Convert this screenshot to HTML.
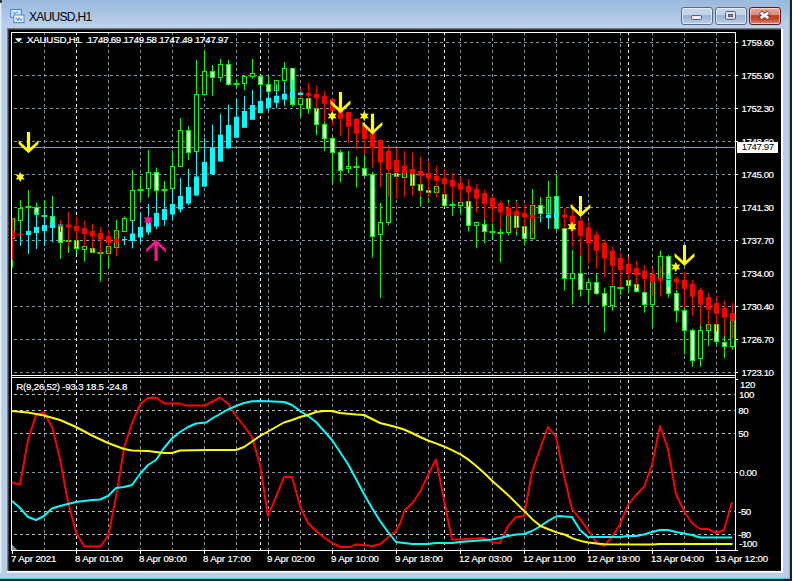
<!DOCTYPE html>
<html><head><meta charset="utf-8"><title>XAUUSD,H1</title>
<style>
html,body{margin:0;padding:0;}
body{width:793px;height:581px;overflow:hidden;position:relative;background:#b8cde8;font-family:"Liberation Sans",sans-serif;}
#win{position:absolute;left:0;top:0;width:793px;height:581px;background:linear-gradient(#9ab8db 0,#a3bfdf 8px,#b3cbe7 20px,#bad1ec 27px,#b8cde8 28px,#b8cde8);}
#title{position:absolute;left:29px;top:9px;font-size:12px;color:#000;letter-spacing:-0.7px;line-height:16px;white-space:nowrap}
.pl{position:absolute;left:741.5px;font-size:9.7px;line-height:12px;color:#fff;white-space:nowrap;letter-spacing:-0.42px;-webkit-text-stroke:0.2px #fff}
.dl{position:absolute;top:553.2px;margin-left:-1px;font-size:9.7px;line-height:12px;color:#fff;white-space:nowrap;letter-spacing:-0.155px;-webkit-text-stroke:0.2px #fff}
#hdr{position:absolute;left:27px;top:34.2px;font-size:9.7px;line-height:12px;color:#fff;white-space:nowrap;letter-spacing:-0.19px;-webkit-text-stroke:0.2px #fff}
#sub{position:absolute;left:16.3px;top:380.8px;font-size:9.7px;line-height:12px;color:#fff;white-space:nowrap;letter-spacing:-0.22px;-webkit-text-stroke:0.2px #fff}
#cur{position:absolute;left:737px;top:142px;width:41px;height:11px;background:#fff;color:#000;font-size:9.7px;line-height:10.7px;letter-spacing:-0.42px;text-indent:4.7px}
.btn{position:absolute;top:7px;height:18px;width:31.5px;border-radius:3px;box-sizing:border-box;border:1px solid #5b6983;box-shadow:inset 0 0 0 1px rgba(255,255,255,.55)}
.bb{background:linear-gradient(#c6d7ec 0,#c1d3ea 46%,#98b2d3 47%,#a9c1df 75%,#bcd1ea 100%)}
.br{background:linear-gradient(#e9aa9d 0,#dc8775 46%,#bf3c22 47%,#c94d33 72%,#df8a70 100%);border-color:#5a1c1c}
.edge{position:absolute}
</style></head><body>
<div id="win">
<div class="edge" style="left:0;top:0;width:1px;height:581px;background:#e6eef8"></div>
<div class="edge" style="left:1px;top:0;width:1px;height:581px;background:rgba(255,255,255,.25)"></div>
<div class="edge" style="left:0;top:0;width:1.6px;height:2.6px;background:#2a3440;border-radius:0 0 1.5px 0"></div>
<div id="title">XAUUSD,H1</div>
<svg style="position:absolute;left:9px;top:8px" width="17" height="17" viewBox="0 0 17 17"><rect x="1.7" y="1.5" width="10.6" height="7.6" fill="#e3eeff" stroke="#3f7fe6" stroke-width="1"/><path d="M3.5 5.5l1.2-1.5 1.5 2 1.5-2.2 1.5 1.7" stroke="#3f7fe6" fill="none" stroke-width=".9"/><rect x="4.8" y="7" width="10.2" height="7.6" fill="#f4f8ff" stroke="#3f7fe6" stroke-width="1"/><path d="M6.3 10.2l1.3 0 1.2 2.6 1.5-3.2 1.4 3.2 1.3-2.4" stroke="#2f6fe0" fill="none" stroke-width=".9"/></svg>
<div class="btn bb" style="left:681px"></div>
<div class="btn bb" style="left:715px"></div>
<div class="btn br" style="left:749px;width:32px"></div>
<svg style="position:absolute;left:681px;top:7px" width="100" height="18" viewBox="0 0 100 18"><rect x="10.6" y="8.6" width="9.8" height="3.8" rx="1" fill="#fbfbfb" stroke="#48506a" stroke-width="1"/><rect x="44.6" y="4.6" width="9.8" height="7.6" rx="1" fill="#f8f8f8" stroke="#48506a" stroke-width="1"/><rect x="47.3" y="7.3" width="4.4" height="2.4" fill="#7388a8" stroke="#48506a" stroke-width="0.9"/><path d="M79.2 5.3l8.6 6.1M87.8 5.3l-8.6 6.1" stroke="#5a3030" stroke-width="4.2" stroke-linecap="butt"/><path d="M79.6 5.6l7.8 5.5M87.4 5.6l-7.8 5.5" stroke="#fff" stroke-width="2.7" stroke-linecap="butt"/></svg>
<div class="edge" style="left:0;top:572.7px;width:790px;height:6px;background:#b8cde8"></div>
<div class="edge" style="left:0;top:578.3px;width:791px;height:1px;background:#52c6ee"></div>
<div class="edge" style="left:0;top:579.3px;width:792px;height:2px;background:#18222c"></div>
<div class="edge" style="left:789.2px;top:0;width:1px;height:579px;background:#52c6ee"></div>
<div class="edge" style="left:790.2px;top:0;width:1.5px;height:581px;background:#18222c"></div>
<div class="edge" style="left:791.7px;top:0;width:1.3px;height:581px;background:#fff"></div>
</div>
<svg width="793" height="581" viewBox="0 0 793 581" style="position:absolute;left:0;top:0">
<rect x="7" y="28.5" width="776" height="544.2" fill="#fff"/>
<rect x="7" y="28" width="774" height="542.7" fill="#7c7c7c"/>
<rect x="8" y="29" width="773" height="541.7" fill="#3c3c3c"/>
<rect x="9" y="30" width="772" height="540.7" fill="#000"/>
<defs><clipPath id="cm"><rect x="11" y="32" width="725" height="343"/></clipPath><clipPath id="cs"><rect x="12" y="378" width="721" height="172"/></clipPath></defs>
<path d="M10.7 42.5H736M10.7 75.5H736M10.7 108.5H736M10.7 141.5H736M10.7 174.5H736M10.7 207.5H736M10.7 240.5H736M10.7 273.5H736M10.7 306.5H736M10.7 339.5H736M10.7 372.5H736M10.7 472.5H736M44.5 29.3V375M44.5 377.3V550M76.5 29.3V375M76.5 377.3V550M108.5 29.3V375M108.5 377.3V550M140.5 29.3V375M140.5 377.3V550M172.5 29.3V375M172.5 377.3V550M204.5 29.3V375M204.5 377.3V550M236.5 29.3V375M236.5 377.3V550M268.5 29.3V375M268.5 377.3V550M300.5 29.3V375M300.5 377.3V550M332.5 29.3V375M332.5 377.3V550M364.5 29.3V375M364.5 377.3V550M396.5 29.3V375M396.5 377.3V550M428.5 29.3V375M428.5 377.3V550M460.5 29.3V375M460.5 377.3V550M492.5 29.3V375M492.5 377.3V550M524.5 29.3V375M524.5 377.3V550M556.5 29.3V375M556.5 377.3V550M588.5 29.3V375M588.5 377.3V550M620.5 29.3V375M620.5 377.3V550M652.5 29.3V375M652.5 377.3V550M684.5 29.3V375M684.5 377.3V550M716.5 29.3V375M716.5 377.3V550"  stroke="#8796a6" stroke-width="1" stroke-dasharray="3 3" stroke-dashoffset="3" fill="none" shape-rendering="crispEdges"/>
<path d="M10.7 394.5H736M10.7 410.5H736M10.7 433.5H736M10.7 511.5H736M10.7 534.5H736" stroke="#c0c0c0" stroke-width="1" stroke-dasharray="3 3" stroke-dashoffset="3" fill="none" shape-rendering="crispEdges"/>
<path d="M76.5 29.3V375M76.5 377.3V550M260.5 29.3V375M260.5 377.3V550M444.5 29.3V375M444.5 377.3V550M628.5 29.3V375M628.5 377.3V550" stroke="#ffffff" stroke-width="1" stroke-dasharray="3 3" stroke-dashoffset="3" fill="none" shape-rendering="crispEdges"/>
<path d="M11 147.5H736" stroke="#8494a8" stroke-width="1" shape-rendering="crispEdges"/>
<g clip-path="url(#cm)">
<path d="M12.5 218V267.5" stroke="#00ff00" stroke-width="1"/>
<rect x="10.5" y="218.5" width="4" height="20" fill="#000" stroke="#00ff00" stroke-width="1"/>
<path d="M20.5 200V246" stroke="#00ff00" stroke-width="1"/>
<rect x="18.5" y="208.5" width="4" height="12" fill="#000" stroke="#00ff00" stroke-width="1"/>
<path d="M28.5 190V240" stroke="#00ff00" stroke-width="1"/>
<rect x="25.5" y="206" width="6" height="2" fill="#00ff00"/>
<path d="M36.5 202.7V225" stroke="#00ff00" stroke-width="1"/>
<rect x="34.5" y="207.5" width="4" height="7" fill="#fff" stroke="#00ff00" stroke-width="1"/>
<path d="M44.5 200V225" stroke="#00ff00" stroke-width="1"/>
<rect x="41.5" y="215" width="6" height="2" fill="#00ff00"/>
<path d="M52.5 196V226" stroke="#00ff00" stroke-width="1"/>
<rect x="50.5" y="216.5" width="4" height="8" fill="#fff" stroke="#00ff00" stroke-width="1"/>
<path d="M60.5 220V259" stroke="#00ff00" stroke-width="1"/>
<rect x="58.5" y="226.5" width="4" height="16" fill="#fff" stroke="#00ff00" stroke-width="1"/>
<path d="M68.5 236V253" stroke="#00ff00" stroke-width="1"/>
<rect x="65.5" y="240" width="6" height="2" fill="#00ff00"/>
<path d="M76.5 238V254" stroke="#00ff00" stroke-width="1"/>
<rect x="74.5" y="240.5" width="4" height="8" fill="#fff" stroke="#00ff00" stroke-width="1"/>
<path d="M84.5 244V261.5" stroke="#00ff00" stroke-width="1"/>
<rect x="82.5" y="246.5" width="4" height="3" fill="#000" stroke="#00ff00" stroke-width="1"/>
<path d="M92.5 246V253" stroke="#00ff00" stroke-width="1"/>
<rect x="90.5" y="248.5" width="4" height="4" fill="#fff" stroke="#00ff00" stroke-width="1"/>
<path d="M100.5 250V281.5" stroke="#00ff00" stroke-width="1"/>
<rect x="97.5" y="252" width="6" height="2" fill="#00ff00"/>
<path d="M108.5 245V268" stroke="#00ff00" stroke-width="1"/>
<rect x="106.5" y="246.5" width="4" height="7" fill="#000" stroke="#00ff00" stroke-width="1"/>
<path d="M116.5 220V248" stroke="#00ff00" stroke-width="1"/>
<rect x="114.5" y="230.5" width="4" height="17" fill="#000" stroke="#00ff00" stroke-width="1"/>
<path d="M124.5 216.5V232" stroke="#00ff00" stroke-width="1"/>
<rect x="122.5" y="218.5" width="4" height="13" fill="#000" stroke="#00ff00" stroke-width="1"/>
<path d="M132.5 170V220.5" stroke="#00ff00" stroke-width="1"/>
<rect x="130.5" y="190.5" width="4" height="30" fill="#000" stroke="#00ff00" stroke-width="1"/>
<path d="M140.5 176V201.5" stroke="#00ff00" stroke-width="1"/>
<rect x="137.5" y="189" width="6" height="2" fill="#00ff00"/>
<path d="M148.5 150V197.5" stroke="#00ff00" stroke-width="1"/>
<rect x="146.5" y="172.5" width="4" height="16" fill="#000" stroke="#00ff00" stroke-width="1"/>
<path d="M156.5 167.5V196" stroke="#00ff00" stroke-width="1"/>
<rect x="154.5" y="172.5" width="4" height="18" fill="#fff" stroke="#00ff00" stroke-width="1"/>
<path d="M164.5 181V200" stroke="#00ff00" stroke-width="1"/>
<rect x="161.5" y="189" width="6" height="2" fill="#00ff00"/>
<path d="M172.5 150.5V198" stroke="#00ff00" stroke-width="1"/>
<rect x="170.5" y="166.5" width="4" height="22" fill="#000" stroke="#00ff00" stroke-width="1"/>
<path d="M180.5 118V167" stroke="#00ff00" stroke-width="1"/>
<rect x="178.5" y="130.5" width="4" height="36" fill="#000" stroke="#00ff00" stroke-width="1"/>
<path d="M188.5 126V160" stroke="#00ff00" stroke-width="1"/>
<rect x="186.5" y="130.5" width="4" height="22" fill="#fff" stroke="#00ff00" stroke-width="1"/>
<path d="M196.5 60V153" stroke="#00ff00" stroke-width="1"/>
<rect x="194.5" y="94.5" width="4" height="57" fill="#000" stroke="#00ff00" stroke-width="1"/>
<path d="M204.5 50V95.5" stroke="#00ff00" stroke-width="1"/>
<rect x="202.5" y="71.5" width="4" height="23" fill="#000" stroke="#00ff00" stroke-width="1"/>
<path d="M212.5 65V95.7" stroke="#00ff00" stroke-width="1"/>
<rect x="210.5" y="71.5" width="4" height="6" fill="#fff" stroke="#00ff00" stroke-width="1"/>
<path d="M220.5 59V81.7" stroke="#00ff00" stroke-width="1"/>
<rect x="218.5" y="64.5" width="4" height="13" fill="#000" stroke="#00ff00" stroke-width="1"/>
<path d="M228.5 60V85.8" stroke="#00ff00" stroke-width="1"/>
<rect x="226.5" y="64.5" width="4" height="20" fill="#fff" stroke="#00ff00" stroke-width="1"/>
<path d="M236.5 79V88.3" stroke="#00ff00" stroke-width="1"/>
<rect x="233.5" y="83" width="6" height="2" fill="#00ff00"/>
<path d="M244.5 75V90.7" stroke="#00ff00" stroke-width="1"/>
<rect x="242.5" y="76.5" width="4" height="7" fill="#000" stroke="#00ff00" stroke-width="1"/>
<path d="M252.5 59V78.8" stroke="#00ff00" stroke-width="1"/>
<rect x="250.5" y="73.5" width="4" height="3" fill="#000" stroke="#00ff00" stroke-width="1"/>
<path d="M260.5 75V86.5" stroke="#00ff00" stroke-width="1"/>
<rect x="258.5" y="76.5" width="4" height="8" fill="#fff" stroke="#00ff00" stroke-width="1"/>
<path d="M268.5 76V92" stroke="#00ff00" stroke-width="1"/>
<rect x="266.5" y="84.5" width="4" height="7" fill="#fff" stroke="#00ff00" stroke-width="1"/>
<path d="M276.5 80V91" stroke="#00ff00" stroke-width="1"/>
<rect x="274.5" y="80.5" width="4" height="10" fill="#000" stroke="#00ff00" stroke-width="1"/>
<path d="M284.5 62V81.7" stroke="#00ff00" stroke-width="1"/>
<rect x="282.5" y="68.5" width="4" height="12" fill="#000" stroke="#00ff00" stroke-width="1"/>
<path d="M292.5 68V106.7" stroke="#00ff00" stroke-width="1"/>
<rect x="290.5" y="68.5" width="4" height="36" fill="#fff" stroke="#00ff00" stroke-width="1"/>
<path d="M300.5 97V116.7" stroke="#00ff00" stroke-width="1"/>
<rect x="298.5" y="98.5" width="4" height="6" fill="#000" stroke="#00ff00" stroke-width="1"/>
<path d="M308.5 98V113.7" stroke="#00ff00" stroke-width="1"/>
<rect x="306.5" y="98.5" width="4" height="10" fill="#fff" stroke="#00ff00" stroke-width="1"/>
<path d="M316.5 107V135" stroke="#00ff00" stroke-width="1"/>
<rect x="314.5" y="108.5" width="4" height="16" fill="#fff" stroke="#00ff00" stroke-width="1"/>
<path d="M324.5 121V151" stroke="#00ff00" stroke-width="1"/>
<rect x="322.5" y="124.5" width="4" height="14" fill="#fff" stroke="#00ff00" stroke-width="1"/>
<path d="M332.5 137V183.3" stroke="#00ff00" stroke-width="1"/>
<rect x="330.5" y="138.5" width="4" height="14" fill="#fff" stroke="#00ff00" stroke-width="1"/>
<path d="M340.5 149.7V182.5" stroke="#00ff00" stroke-width="1"/>
<rect x="338.5" y="152.5" width="4" height="18" fill="#fff" stroke="#00ff00" stroke-width="1"/>
<path d="M348.5 151V173.3" stroke="#00ff00" stroke-width="1"/>
<rect x="346.5" y="166.5" width="4" height="2" fill="#000" stroke="#00ff00" stroke-width="1"/>
<path d="M356.5 156.7V187.5" stroke="#00ff00" stroke-width="1"/>
<rect x="353.5" y="166" width="6" height="2" fill="#00ff00"/>
<path d="M364.5 154.7V177.5" stroke="#00ff00" stroke-width="1"/>
<rect x="362.5" y="168.5" width="4" height="7" fill="#fff" stroke="#00ff00" stroke-width="1"/>
<path d="M372.5 171.7V257.5" stroke="#00ff00" stroke-width="1"/>
<rect x="370.5" y="174.5" width="4" height="62" fill="#fff" stroke="#00ff00" stroke-width="1"/>
<path d="M380.5 203V298.3" stroke="#00ff00" stroke-width="1"/>
<rect x="378.5" y="222.5" width="4" height="12" fill="#000" stroke="#00ff00" stroke-width="1"/>
<path d="M388.5 172V225.3" stroke="#00ff00" stroke-width="1"/>
<rect x="386.5" y="173.5" width="4" height="49" fill="#000" stroke="#00ff00" stroke-width="1"/>
<path d="M396.5 172V178" stroke="#00ff00" stroke-width="1"/>
<rect x="394.5" y="173.5" width="4" height="3" fill="#fff" stroke="#00ff00" stroke-width="1"/>
<path d="M404.5 172V178.5" stroke="#00ff00" stroke-width="1"/>
<rect x="402.5" y="172.5" width="4" height="5" fill="#000" stroke="#00ff00" stroke-width="1"/>
<path d="M412.5 173V186" stroke="#00ff00" stroke-width="1"/>
<rect x="410.5" y="174.5" width="4" height="11" fill="#fff" stroke="#00ff00" stroke-width="1"/>
<path d="M420.5 184V206.7" stroke="#00ff00" stroke-width="1"/>
<rect x="418.5" y="184.5" width="4" height="6" fill="#fff" stroke="#00ff00" stroke-width="1"/>
<path d="M428.5 189V203" stroke="#00ff00" stroke-width="1"/>
<rect x="426.5" y="190.5" width="4" height="2" fill="#fff" stroke="#00ff00" stroke-width="1"/>
<path d="M436.5 186V197" stroke="#00ff00" stroke-width="1"/>
<rect x="434.5" y="186.5" width="4" height="6" fill="#000" stroke="#00ff00" stroke-width="1"/>
<path d="M444.5 193V206.5" stroke="#00ff00" stroke-width="1"/>
<rect x="442.5" y="194.5" width="4" height="11" fill="#fff" stroke="#00ff00" stroke-width="1"/>
<path d="M452.5 200V215.8" stroke="#00ff00" stroke-width="1"/>
<rect x="449.5" y="204" width="6" height="2" fill="#00ff00"/>
<path d="M460.5 202V214" stroke="#00ff00" stroke-width="1"/>
<rect x="458.5" y="202.5" width="4" height="3" fill="#000" stroke="#00ff00" stroke-width="1"/>
<path d="M468.5 200V231.5" stroke="#00ff00" stroke-width="1"/>
<rect x="466.5" y="201.5" width="4" height="24" fill="#fff" stroke="#00ff00" stroke-width="1"/>
<path d="M476.5 221.7V248.3" stroke="#00ff00" stroke-width="1"/>
<rect x="474.5" y="222.5" width="4" height="3" fill="#000" stroke="#00ff00" stroke-width="1"/>
<path d="M484.5 219V243.3" stroke="#00ff00" stroke-width="1"/>
<rect x="482.5" y="224.5" width="4" height="7" fill="#fff" stroke="#00ff00" stroke-width="1"/>
<path d="M492.5 223.3V240" stroke="#00ff00" stroke-width="1"/>
<rect x="489.5" y="231" width="6" height="2" fill="#00ff00"/>
<path d="M500.5 228.3V262.5" stroke="#00ff00" stroke-width="1"/>
<rect x="497.5" y="232" width="6" height="2" fill="#00ff00"/>
<path d="M508.5 200V235.5" stroke="#00ff00" stroke-width="1"/>
<rect x="506.5" y="215.5" width="4" height="17" fill="#000" stroke="#00ff00" stroke-width="1"/>
<path d="M516.5 200V235.5" stroke="#00ff00" stroke-width="1"/>
<rect x="514.5" y="215.5" width="4" height="12" fill="#fff" stroke="#00ff00" stroke-width="1"/>
<path d="M524.5 215V245.5" stroke="#00ff00" stroke-width="1"/>
<rect x="522.5" y="226.5" width="4" height="12" fill="#fff" stroke="#00ff00" stroke-width="1"/>
<path d="M532.5 189V239.5" stroke="#00ff00" stroke-width="1"/>
<rect x="530.5" y="205.5" width="4" height="33" fill="#000" stroke="#00ff00" stroke-width="1"/>
<path d="M540.5 197V222" stroke="#00ff00" stroke-width="1"/>
<rect x="538.5" y="205.5" width="4" height="8" fill="#fff" stroke="#00ff00" stroke-width="1"/>
<path d="M548.5 180.8V215" stroke="#00ff00" stroke-width="1"/>
<rect x="546.5" y="197.5" width="4" height="16" fill="#000" stroke="#00ff00" stroke-width="1"/>
<path d="M556.5 174V230" stroke="#00ff00" stroke-width="1"/>
<rect x="554.5" y="196.5" width="4" height="32" fill="#fff" stroke="#00ff00" stroke-width="1"/>
<path d="M564.5 225V290.8" stroke="#00ff00" stroke-width="1"/>
<rect x="562.5" y="228.5" width="4" height="50" fill="#fff" stroke="#00ff00" stroke-width="1"/>
<path d="M572.5 250V304.7" stroke="#00ff00" stroke-width="1"/>
<rect x="570.5" y="273.5" width="4" height="5" fill="#000" stroke="#00ff00" stroke-width="1"/>
<path d="M580.5 255.8V296.7" stroke="#00ff00" stroke-width="1"/>
<rect x="578.5" y="273.5" width="4" height="16" fill="#fff" stroke="#00ff00" stroke-width="1"/>
<path d="M588.5 278.3V304" stroke="#00ff00" stroke-width="1"/>
<rect x="586.5" y="282.5" width="4" height="7" fill="#000" stroke="#00ff00" stroke-width="1"/>
<path d="M596.5 274V294.7" stroke="#00ff00" stroke-width="1"/>
<rect x="594.5" y="282.5" width="4" height="11" fill="#fff" stroke="#00ff00" stroke-width="1"/>
<path d="M604.5 287.5V332.5" stroke="#00ff00" stroke-width="1"/>
<rect x="602.5" y="293.5" width="4" height="12" fill="#fff" stroke="#00ff00" stroke-width="1"/>
<path d="M612.5 285.8V310.8" stroke="#00ff00" stroke-width="1"/>
<rect x="610.5" y="286.5" width="4" height="19" fill="#000" stroke="#00ff00" stroke-width="1"/>
<path d="M620.5 286V294.7" stroke="#00ff00" stroke-width="1"/>
<rect x="617.5" y="287" width="6" height="2" fill="#00ff00"/>
<path d="M628.5 279V292.5" stroke="#00ff00" stroke-width="1"/>
<rect x="626.5" y="280.5" width="4" height="5" fill="#fff" stroke="#00ff00" stroke-width="1"/>
<path d="M636.5 284V292.3" stroke="#00ff00" stroke-width="1"/>
<rect x="634.5" y="284.5" width="4" height="7" fill="#fff" stroke="#00ff00" stroke-width="1"/>
<path d="M644.5 291V312.7" stroke="#00ff00" stroke-width="1"/>
<rect x="642.5" y="292.5" width="4" height="12" fill="#fff" stroke="#00ff00" stroke-width="1"/>
<path d="M652.5 281V328.3" stroke="#00ff00" stroke-width="1"/>
<rect x="650.5" y="281.5" width="4" height="23" fill="#000" stroke="#00ff00" stroke-width="1"/>
<path d="M660.5 250.8V280" stroke="#00ff00" stroke-width="1"/>
<rect x="658.5" y="256.5" width="4" height="22" fill="#000" stroke="#00ff00" stroke-width="1"/>
<path d="M668.5 255V297.5" stroke="#00ff00" stroke-width="1"/>
<rect x="666.5" y="256.5" width="4" height="37" fill="#fff" stroke="#00ff00" stroke-width="1"/>
<path d="M676.5 290V322.5" stroke="#00ff00" stroke-width="1"/>
<rect x="674.5" y="293.5" width="4" height="17" fill="#fff" stroke="#00ff00" stroke-width="1"/>
<path d="M684.5 306.7V354.7" stroke="#00ff00" stroke-width="1"/>
<rect x="682.5" y="310.5" width="4" height="20" fill="#fff" stroke="#00ff00" stroke-width="1"/>
<path d="M692.5 329V366.7" stroke="#00ff00" stroke-width="1"/>
<rect x="690.5" y="330.5" width="4" height="30" fill="#fff" stroke="#00ff00" stroke-width="1"/>
<path d="M700.5 325V366.7" stroke="#00ff00" stroke-width="1"/>
<rect x="698.5" y="330.5" width="4" height="28" fill="#000" stroke="#00ff00" stroke-width="1"/>
<path d="M708.5 324V345.8" stroke="#00ff00" stroke-width="1"/>
<rect x="706.5" y="324.5" width="4" height="6" fill="#000" stroke="#00ff00" stroke-width="1"/>
<path d="M716.5 324V345.8" stroke="#00ff00" stroke-width="1"/>
<rect x="714.5" y="324.5" width="4" height="17" fill="#fff" stroke="#00ff00" stroke-width="1"/>
<path d="M724.5 335.8V358.3" stroke="#00ff00" stroke-width="1"/>
<rect x="722.5" y="342.5" width="4" height="4" fill="#fff" stroke="#00ff00" stroke-width="1"/>
<path d="M732.5 320V349.7" stroke="#00ff00" stroke-width="1"/>
<rect x="730.5" y="320.5" width="4" height="26" fill="#000" stroke="#00ff00" stroke-width="1"/>
<path d="M12.5 218V260" stroke="#ff0000" stroke-width="1"/>
<rect x="10" y="231" width="5" height="6.5" fill="#ff0000"/>
<path d="M20.5 231V245" stroke="#00ffff" stroke-width="1"/>
<rect x="18" y="234" width="5" height="1" fill="#ff0000"/>
<path d="M28.5 212.5V254" stroke="#00ffff" stroke-width="1"/>
<rect x="26" y="231" width="5" height="4" fill="#00ffff"/>
<path d="M36.5 212V249" stroke="#00ffff" stroke-width="1"/>
<rect x="34" y="227" width="5" height="6" fill="#00ffff"/>
<path d="M44.5 209V246" stroke="#00ffff" stroke-width="1"/>
<rect x="42" y="225" width="5" height="6" fill="#00ffff"/>
<path d="M52.5 207V242.5" stroke="#00ffff" stroke-width="1"/>
<rect x="50" y="222.5" width="5" height="5.5" fill="#00ffff"/>
<path d="M60.5 220V232" stroke="#ff0000" stroke-width="1"/>
<rect x="58" y="224.5" width="5" height="1" fill="#00ffff"/>
<path d="M68.5 212V246" stroke="#ff0000" stroke-width="1"/>
<rect x="66" y="224.5" width="5" height="3" fill="#ff0000"/>
<path d="M76.5 217V247.5" stroke="#ff0000" stroke-width="1"/>
<rect x="74" y="226" width="5" height="5" fill="#ff0000"/>
<path d="M84.5 221V247.5" stroke="#ff0000" stroke-width="1"/>
<rect x="82" y="228" width="5" height="6" fill="#ff0000"/>
<path d="M92.5 224V252.5" stroke="#ff0000" stroke-width="1"/>
<rect x="90" y="231" width="5" height="5.5" fill="#ff0000"/>
<path d="M100.5 227V254" stroke="#ff0000" stroke-width="1"/>
<rect x="98" y="233" width="5" height="6.5" fill="#ff0000"/>
<path d="M108.5 230V256.5" stroke="#ff0000" stroke-width="1"/>
<rect x="106" y="236" width="5" height="7" fill="#ff0000"/>
<path d="M116.5 230V256.5" stroke="#ff0000" stroke-width="1"/>
<rect x="114" y="239" width="5" height="4" fill="#ff0000"/>
<path d="M124.5 236.5V245" stroke="#00ffff" stroke-width="1"/>
<rect x="122" y="239" width="5" height="1" fill="#00ffff"/>
<path d="M132.5 220V248.5" stroke="#00ffff" stroke-width="1"/>
<rect x="130" y="233.5" width="5" height="7.5" fill="#00ffff"/>
<path d="M140.5 212.5V242.5" stroke="#00ffff" stroke-width="1"/>
<rect x="138" y="227" width="5" height="10.5" fill="#00ffff"/>
<path d="M148.5 204V235" stroke="#00ffff" stroke-width="1"/>
<rect x="146" y="222.5" width="5" height="10" fill="#00ffff"/>
<path d="M156.5 196V229" stroke="#00ffff" stroke-width="1"/>
<rect x="154" y="213" width="5" height="13.5" fill="#00ffff"/>
<path d="M164.5 200V226" stroke="#00ffff" stroke-width="1"/>
<rect x="162" y="209" width="5" height="11" fill="#00ffff"/>
<path d="M172.5 189V220" stroke="#00ffff" stroke-width="1"/>
<rect x="170" y="204" width="5" height="10.5" fill="#00ffff"/>
<path d="M180.5 178V212.5" stroke="#00ffff" stroke-width="1"/>
<rect x="178" y="196" width="5" height="13.5" fill="#00ffff"/>
<path d="M188.5 169V205" stroke="#00ffff" stroke-width="1"/>
<rect x="186" y="187" width="5" height="16.5" fill="#00ffff"/>
<path d="M196.5 153V196" stroke="#00ffff" stroke-width="1"/>
<rect x="194" y="176.5" width="5" height="19" fill="#00ffff"/>
<path d="M204.5 138V187" stroke="#00ffff" stroke-width="1"/>
<rect x="202" y="162" width="5" height="24.5" fill="#00ffff"/>
<path d="M212.5 124.7V175" stroke="#00ffff" stroke-width="1"/>
<rect x="210" y="147.7" width="5" height="26.8" fill="#00ffff"/>
<path d="M220.5 113.8V162" stroke="#00ffff" stroke-width="1"/>
<rect x="218" y="134.7" width="5" height="26.8" fill="#00ffff"/>
<path d="M228.5 104.8V149" stroke="#00ffff" stroke-width="1"/>
<rect x="226" y="125" width="5" height="23.3" fill="#00ffff"/>
<path d="M236.5 98.8V138" stroke="#00ffff" stroke-width="1"/>
<rect x="234" y="116.8" width="5" height="20.9" fill="#00ffff"/>
<path d="M244.5 96V128" stroke="#00ffff" stroke-width="1"/>
<rect x="242" y="111" width="5" height="16.7" fill="#00ffff"/>
<path d="M252.5 89.8V120" stroke="#00ffff" stroke-width="1"/>
<rect x="250" y="105" width="5" height="14.7" fill="#00ffff"/>
<path d="M260.5 86.7V113.3" stroke="#00ffff" stroke-width="1"/>
<rect x="258" y="101" width="5" height="12" fill="#00ffff"/>
<path d="M268.5 91.7V111" stroke="#00ffff" stroke-width="1"/>
<rect x="266" y="97.8" width="5" height="10" fill="#00ffff"/>
<path d="M276.5 84V108.3" stroke="#00ffff" stroke-width="1"/>
<rect x="274" y="95.8" width="5" height="7" fill="#00ffff"/>
<path d="M284.5 81.7V105.8" stroke="#00ffff" stroke-width="1"/>
<rect x="282" y="93.7" width="5" height="6" fill="#00ffff"/>
<path d="M292.5 79V104" stroke="#00ffff" stroke-width="1"/>
<rect x="290" y="92" width="5" height="5" fill="#00ffff"/>
<path d="M300.5 88.3V98.3" stroke="#ff0000" stroke-width="1"/>
<rect x="298" y="92.5" width="5" height="2.5" fill="#00ffff"/>
<path d="M308.5 82.5V108" stroke="#ff0000" stroke-width="1"/>
<rect x="306" y="93" width="5" height="2.8" fill="#ff0000"/>
<path d="M316.5 86V111.7" stroke="#ff0000" stroke-width="1"/>
<rect x="314" y="94" width="5" height="4.3" fill="#ff0000"/>
<path d="M324.5 91V121.7" stroke="#ff0000" stroke-width="1"/>
<rect x="322" y="96" width="5" height="7.7" fill="#ff0000"/>
<path d="M332.5 99V126" stroke="#ff0000" stroke-width="1"/>
<rect x="330" y="99" width="5" height="12" fill="#ff0000"/>
<path d="M340.5 107V135.8" stroke="#ff0000" stroke-width="1"/>
<rect x="338" y="107" width="5" height="11.7" fill="#ff0000"/>
<path d="M348.5 112V142.5" stroke="#ff0000" stroke-width="1"/>
<rect x="346" y="112" width="5" height="14.7" fill="#ff0000"/>
<path d="M356.5 118.7V149.7" stroke="#ff0000" stroke-width="1"/>
<rect x="354" y="118.7" width="5" height="15" fill="#ff0000"/>
<path d="M364.5 125V155" stroke="#ff0000" stroke-width="1"/>
<rect x="362" y="125" width="5" height="14" fill="#ff0000"/>
<path d="M372.5 132.5V167.5" stroke="#ff0000" stroke-width="1"/>
<rect x="370" y="132.5" width="5" height="15.8" fill="#ff0000"/>
<path d="M380.5 140V186.7" stroke="#ff0000" stroke-width="1"/>
<rect x="378" y="140" width="5" height="22.5" fill="#ff0000"/>
<path d="M388.5 145V197.5" stroke="#ff0000" stroke-width="1"/>
<rect x="386" y="151" width="5" height="18.7" fill="#ff0000"/>
<path d="M396.5 148.3V198.7" stroke="#ff0000" stroke-width="1"/>
<rect x="394" y="160" width="5" height="12.5" fill="#ff0000"/>
<path d="M404.5 150.8V197.5" stroke="#ff0000" stroke-width="1"/>
<rect x="402" y="165.8" width="5" height="7.2" fill="#ff0000"/>
<path d="M412.5 152.5V196" stroke="#ff0000" stroke-width="1"/>
<rect x="410" y="169" width="5" height="5" fill="#ff0000"/>
<path d="M420.5 156.7V196" stroke="#ff0000" stroke-width="1"/>
<rect x="418" y="171" width="5" height="5" fill="#ff0000"/>
<path d="M428.5 161.7V198.3" stroke="#ff0000" stroke-width="1"/>
<rect x="426" y="173" width="5" height="5.7" fill="#ff0000"/>
<path d="M436.5 165.8V197.5" stroke="#ff0000" stroke-width="1"/>
<rect x="434" y="175.8" width="5" height="5" fill="#ff0000"/>
<path d="M444.5 169V199" stroke="#ff0000" stroke-width="1"/>
<rect x="442" y="178" width="5" height="5.8" fill="#ff0000"/>
<path d="M452.5 173V200.8" stroke="#ff0000" stroke-width="1"/>
<rect x="450" y="179.7" width="5" height="7" fill="#ff0000"/>
<path d="M460.5 176.7V203" stroke="#ff0000" stroke-width="1"/>
<rect x="458" y="183" width="5" height="6.7" fill="#ff0000"/>
<path d="M468.5 179V206.7" stroke="#ff0000" stroke-width="1"/>
<rect x="466" y="185.8" width="5" height="6.7" fill="#ff0000"/>
<path d="M476.5 184V212.5" stroke="#ff0000" stroke-width="1"/>
<rect x="474" y="189" width="5" height="9.7" fill="#ff0000"/>
<path d="M484.5 190V219" stroke="#ff0000" stroke-width="1"/>
<rect x="482" y="193" width="5" height="10.7" fill="#ff0000"/>
<path d="M492.5 195.8V222.5" stroke="#ff0000" stroke-width="1"/>
<rect x="490" y="198" width="5" height="10.7" fill="#ff0000"/>
<path d="M500.5 200.8V227.5" stroke="#ff0000" stroke-width="1"/>
<rect x="498" y="203" width="5" height="9.5" fill="#ff0000"/>
<path d="M508.5 203V230.8" stroke="#ff0000" stroke-width="1"/>
<rect x="506" y="208" width="5" height="7.8" fill="#ff0000"/>
<path d="M516.5 201.7V231.7" stroke="#ff0000" stroke-width="1"/>
<rect x="514" y="210.8" width="5" height="5" fill="#ff0000"/>
<path d="M524.5 204V233.3" stroke="#ff0000" stroke-width="1"/>
<rect x="522" y="213" width="5" height="4.5" fill="#ff0000"/>
<path d="M532.5 204V234.5" stroke="#ff0000" stroke-width="1"/>
<rect x="530" y="215" width="5" height="3.7" fill="#ff0000"/>
<path d="M540.5 213.3V222.5" stroke="#00ffff" stroke-width="1"/>
<rect x="538" y="216.8" width="5" height="1" fill="#ff0000"/>
<path d="M548.5 199V229" stroke="#00ffff" stroke-width="1"/>
<rect x="546" y="214.7" width="5" height="3.3" fill="#00ffff"/>
<path d="M556.5 196V229" stroke="#00ffff" stroke-width="1"/>
<rect x="554" y="213" width="5" height="4" fill="#00ffff"/>
<path d="M564.5 208V229" stroke="#ff0000" stroke-width="1"/>
<rect x="562" y="214.7" width="5" height="2.8" fill="#ff0000"/>
<path d="M572.5 204V246.7" stroke="#ff0000" stroke-width="1"/>
<rect x="570" y="215.8" width="5" height="15" fill="#ff0000"/>
<path d="M580.5 211V255.8" stroke="#ff0000" stroke-width="1"/>
<rect x="578" y="220.8" width="5" height="15" fill="#ff0000"/>
<path d="M588.5 221.7V262.5" stroke="#ff0000" stroke-width="1"/>
<rect x="586" y="227.5" width="5" height="16" fill="#ff0000"/>
<path d="M596.5 230.8V268.7" stroke="#ff0000" stroke-width="1"/>
<rect x="594" y="234.7" width="5" height="16.1" fill="#ff0000"/>
<path d="M604.5 239V277.5" stroke="#ff0000" stroke-width="1"/>
<rect x="602" y="243" width="5" height="15.5" fill="#ff0000"/>
<path d="M612.5 246.7V285.8" stroke="#ff0000" stroke-width="1"/>
<rect x="610" y="250.8" width="5" height="15" fill="#ff0000"/>
<path d="M620.5 253V287.5" stroke="#ff0000" stroke-width="1"/>
<rect x="618" y="258" width="5" height="12" fill="#ff0000"/>
<path d="M628.5 256.7V285" stroke="#ff0000" stroke-width="1"/>
<rect x="626" y="264" width="5" height="9" fill="#ff0000"/>
<path d="M636.5 260.8V288.3" stroke="#ff0000" stroke-width="1"/>
<rect x="634" y="268" width="5" height="7" fill="#ff0000"/>
<path d="M644.5 265V292" stroke="#ff0000" stroke-width="1"/>
<rect x="642" y="270.8" width="5" height="8" fill="#ff0000"/>
<path d="M652.5 268V296.7" stroke="#ff0000" stroke-width="1"/>
<rect x="650" y="274" width="5" height="8" fill="#ff0000"/>
<path d="M660.5 265.8V296.7" stroke="#ff0000" stroke-width="1"/>
<rect x="658" y="278" width="5" height="2.8" fill="#ff0000"/>
<path d="M668.5 274V286.7" stroke="#00ffff" stroke-width="1"/>
<rect x="666" y="279" width="5" height="1" fill="#ff0000"/>
<path d="M676.5 276.7V289" stroke="#ff0000" stroke-width="1"/>
<rect x="674" y="278.7" width="5" height="3.8" fill="#ff0000"/>
<path d="M684.5 271.7V307.5" stroke="#ff0000" stroke-width="1"/>
<rect x="682" y="280" width="5" height="8.7" fill="#ff0000"/>
<path d="M692.5 279.7V315.8" stroke="#ff0000" stroke-width="1"/>
<rect x="690" y="283.7" width="5" height="13" fill="#ff0000"/>
<path d="M700.5 287.5V325" stroke="#ff0000" stroke-width="1"/>
<rect x="698" y="290" width="5" height="14.7" fill="#ff0000"/>
<path d="M708.5 293V329" stroke="#ff0000" stroke-width="1"/>
<rect x="706" y="297" width="5" height="12.7" fill="#ff0000"/>
<path d="M716.5 296V331.7" stroke="#ff0000" stroke-width="1"/>
<rect x="714" y="303" width="5" height="10.7" fill="#ff0000"/>
<path d="M724.5 300.8V335.8" stroke="#ff0000" stroke-width="1"/>
<rect x="722" y="308" width="5" height="9.5" fill="#ff0000"/>
<path d="M732.5 303V338.7" stroke="#ff0000" stroke-width="1"/>
<rect x="730" y="313" width="5" height="7.8" fill="#ff0000"/>
<polygon points="28.5,153.2 38.4,143.9 38.4,140.3 30.1,148 30.1,132 26.9,132 26.9,148 18.6,140.3 18.6,143.9" fill="#ffff00"/>
<polygon points="340.5,113.2 350.4,103.9 350.4,100.3 342.1,108 342.1,92 338.9,92 338.9,108 330.6,100.3 330.6,103.9" fill="#ffff00"/>
<polygon points="372.5,134.6 382.4,125.3 382.4,121.7 374.1,129.4 374.1,113.7 370.9,113.7 370.9,129.4 362.6,121.7 362.6,125.3" fill="#ffff00"/>
<polygon points="580.5,217 590.4,207.7 590.4,204.1 582,211.8 582,196 579,196 579,211.8 570.6,204.1 570.6,207.7" fill="#ffff00"/>
<polygon points="684.5,266 694.4,256.7 694.4,253.1 686,260.8 686,245 683,245 683,260.8 674.6,253.1 674.6,256.7" fill="#ffff00"/>
<polygon points="156.1,239.7 166,249 166,252.6 157.7,244.9 157.7,261 154.5,261 154.5,244.9 146.2,252.6 146.2,249" fill="#ff1493"/>
<polygon points="20.2,171.8 18.9,174.7 15.7,174.4 17.6,177 15.7,179.6 18.9,179.3 20.2,182.2 21.5,179.3 24.7,179.6 22.8,177 24.7,174.4 21.5,174.7" fill="#ffff00"/>
<polygon points="332.2,110.8 330.9,113.7 327.7,113.4 329.6,116 327.7,118.6 330.9,118.3 332.2,121.2 333.5,118.3 336.7,118.6 334.8,116 336.7,113.4 333.5,113.7" fill="#ffff00"/>
<polygon points="364.3,110.8 363,113.7 359.8,113.4 361.7,116 359.8,118.6 363,118.3 364.3,121.2 365.6,118.3 368.8,118.6 366.9,116 368.8,113.4 365.6,113.7" fill="#ffff00"/>
<polygon points="572,221.5 570.7,224.4 567.5,224.1 569.4,226.7 567.5,229.3 570.7,229 572,231.9 573.3,229 576.5,229.3 574.6,226.7 576.5,224.1 573.3,224.4" fill="#ffff00"/>
<polygon points="675.8,261.8 674.5,264.7 671.3,264.4 673.2,267 671.3,269.6 674.5,269.3 675.8,272.2 677.1,269.3 680.3,269.6 678.4,267 680.3,264.4 677.1,264.7" fill="#ffff00"/>
<polygon points="148.3,214.8 147,217.7 143.8,217.4 145.7,220 143.8,222.6 147,222.3 148.3,225.2 149.6,222.3 152.8,222.6 150.9,220 152.8,217.4 149.6,217.7" fill="#ff1493"/>
</g>
<g clip-path="url(#cs)" fill="none" stroke-width="2" stroke-linejoin="round">
<polyline points="12,482.5 20,484.5 28,440 36,415 44,412.5 52.5,428 60.5,461 64,481 68.5,504 76.5,533.5 84.5,546.5 100.5,546.5 108.5,535 116.5,494 124.5,446 132.5,422 140.5,404 148,398 156,397.5 164.5,403.6 180.5,403.6 186,405.6 204.5,405.6 212.5,401.5 220,397.5 228,403.5 236,416 244,426 252,437 260,465 268,516 276,497 284,477 292,477 300,506 308,523 316,531 324,537.5 332,543 340.5,547 350.5,547 355,544.5 360,544.8 372.5,546 380.5,544 388.5,537 396,531 400,523.5 404.5,510.5 412.5,503 420.5,491 428,475 436,459.5 444,500 452,539.6 460,539.6 476,538.6 484,538 492,542.5 500,543 508,526 516,517 524,516 532,472 540,449 548,427 556,437 564,476 572,509 580,519 588,530 596,542 604,546 612,537 620,524 628,505 636,495 644,487 652,465 660,426 668,449 676,494 684,511 692,523 700,529 708,529 716,533 724,530 732,502" stroke="#ff0000"/>
<polyline points="12,501 20,508 28,517 36,520 44,516 52,508.5 60,506 76,502 92,500 100,499.5 108,496 116,488 124,487 132,485 140,474 148,465 156,460 164,448 172,438.5 180,432 188,427 196,423.5 206,422.5 212,418.5 220,414 228,409.5 236,406 244,403 252,401.3 260,401 268,401.3 284,402 292,405 300,411 308,416 316,422 324,431 332,440 340,452 348,464 356,479 364,494 372,508 380,521 388,532 396,542 404,543 412,544 428,544 436,543 452,543 460,542 476,540.7 492,539.5 500,538 508,536 516,534.5 524,534 532,531 540,526.5 548,521 556,516.5 560,516 564,516.5 572,517 580,530 588,537 620,537 628,536 636,536 644,534.5 652,532 660,530 668,530 676,532 684,533.5 692,535 700,537.5 732,537.5" stroke="#00ffff"/>
<polyline points="12,411 28,412.5 44,415.5 60,420 76,427 92,435.5 108,443 124,449 132,450.5 148,451 164,453 172,453 180,450.5 208,450 236,450 244,447 252,441.5 260,436 268,431.5 276,427 284,422.5 292,420 300,417 308,415 316,412 324,411 332,411 340,413 356,414.5 364,415 372,419 380,423 388,425 396,427 404,429.5 412,433 420,437 428,440.5 436.5,443.6 444.5,446.7 452.5,450.3 460.5,454.3 468.5,459.7 476.5,466.2 484.5,473.3 492.5,481.2 500.5,488.2 508.5,495.4 516.5,503.4 524.5,511.4 532.5,519.4 540.5,526 548.5,529.2 556.5,532.4 564.5,534.5 572.5,538.4 580.5,540.9 588.5,542.4 596.5,543.6 604.5,544.3 652,544.5 660,544 732.5,544" stroke="#ffff00"/>
</g>
<path d="M11.5 32V551M11 32.5H736M11 375.5H736M11 377.5H736M735.5 32V551M11 550.5H737.5" stroke="#fff" stroke-width="1" fill="none" shape-rendering="crispEdges"/>
<path d="M736 42.5H738M736 75.5H738M736 108.5H738M736 141.5H738M736 174.5H738M736 207.5H738M736 240.5H738M736 273.5H738M736 306.5H738M736 339.5H738M736 372.5H738M736 379.5H738M736 472.5H738M12.5 551V554M76.5 551V554M140.5 551V554M204.5 551V554M268.5 551V554M332.5 551V554M396.5 551V554M460.5 551V554M524.5 551V554M588.5 551V554M652.5 551V554M716.5 551V554" stroke="#fff" stroke-width="1" shape-rendering="crispEdges"/>
<path d="M15 38.3h7.4l-3.7 4.2z" fill="#fff"/>
<path d="M12 544.5L17.5 550H12Z" fill="#7d8fa3"/>
</svg>
<div id="hdr">XAUUSD,H1<span style="position:absolute;left:60.6px;top:0;letter-spacing:-0.24px">1748.69 1749.58 1747.49 1747.97</span></div>
<div id="sub">R(9,26,52) -93.3 18.5 -24.8</div>
<div class="pl" style="top:36.5px">1759.60</div>
<div class="pl" style="top:69.5px">1755.90</div>
<div class="pl" style="top:102.5px">1752.30</div>
<div class="pl" style="top:135.5px">1748.60</div>
<div class="pl" style="top:168.5px">1745.00</div>
<div class="pl" style="top:201.5px">1741.30</div>
<div class="pl" style="top:234.5px">1737.70</div>
<div class="pl" style="top:267.5px">1734.00</div>
<div class="pl" style="top:300.5px">1730.40</div>
<div class="pl" style="top:333.5px">1726.70</div>
<div class="pl" style="top:366.5px">1723.10</div>
<div class="pl" style="top:379.1px;left:740px">120</div>
<div class="pl" style="top:389.1px;left:739px">100</div>
<div class="pl" style="top:404.9px;left:738.2px">80</div>
<div class="pl" style="top:428.0px;left:738.2px">50</div>
<div class="pl" style="top:467.0px;left:739.3px">0.00</div>
<div class="pl" style="top:506.2px;left:738.1px">-50</div>
<div class="pl" style="top:529.0px;left:738.1px">-80</div>
<div class="pl" style="top:538.1px;left:739.3px">-100</div>
<div class="dl" style="left:12px">7 Apr 2021</div>
<div class="dl" style="left:76px">8 Apr 01:00</div>
<div class="dl" style="left:140px">8 Apr 09:00</div>
<div class="dl" style="left:204px">8 Apr 17:00</div>
<div class="dl" style="left:268px">9 Apr 02:00</div>
<div class="dl" style="left:332px">9 Apr 10:00</div>
<div class="dl" style="left:396px">9 Apr 18:00</div>
<div class="dl" style="left:460px">12 Apr 03:00</div>
<div class="dl" style="left:524px">12 Apr 11:00</div>
<div class="dl" style="left:588px">12 Apr 19:00</div>
<div class="dl" style="left:652px">13 Apr 04:00</div>
<div class="dl" style="left:716px">13 Apr 12:00</div>
<div id="cur">1747.97</div>
</body></html>
